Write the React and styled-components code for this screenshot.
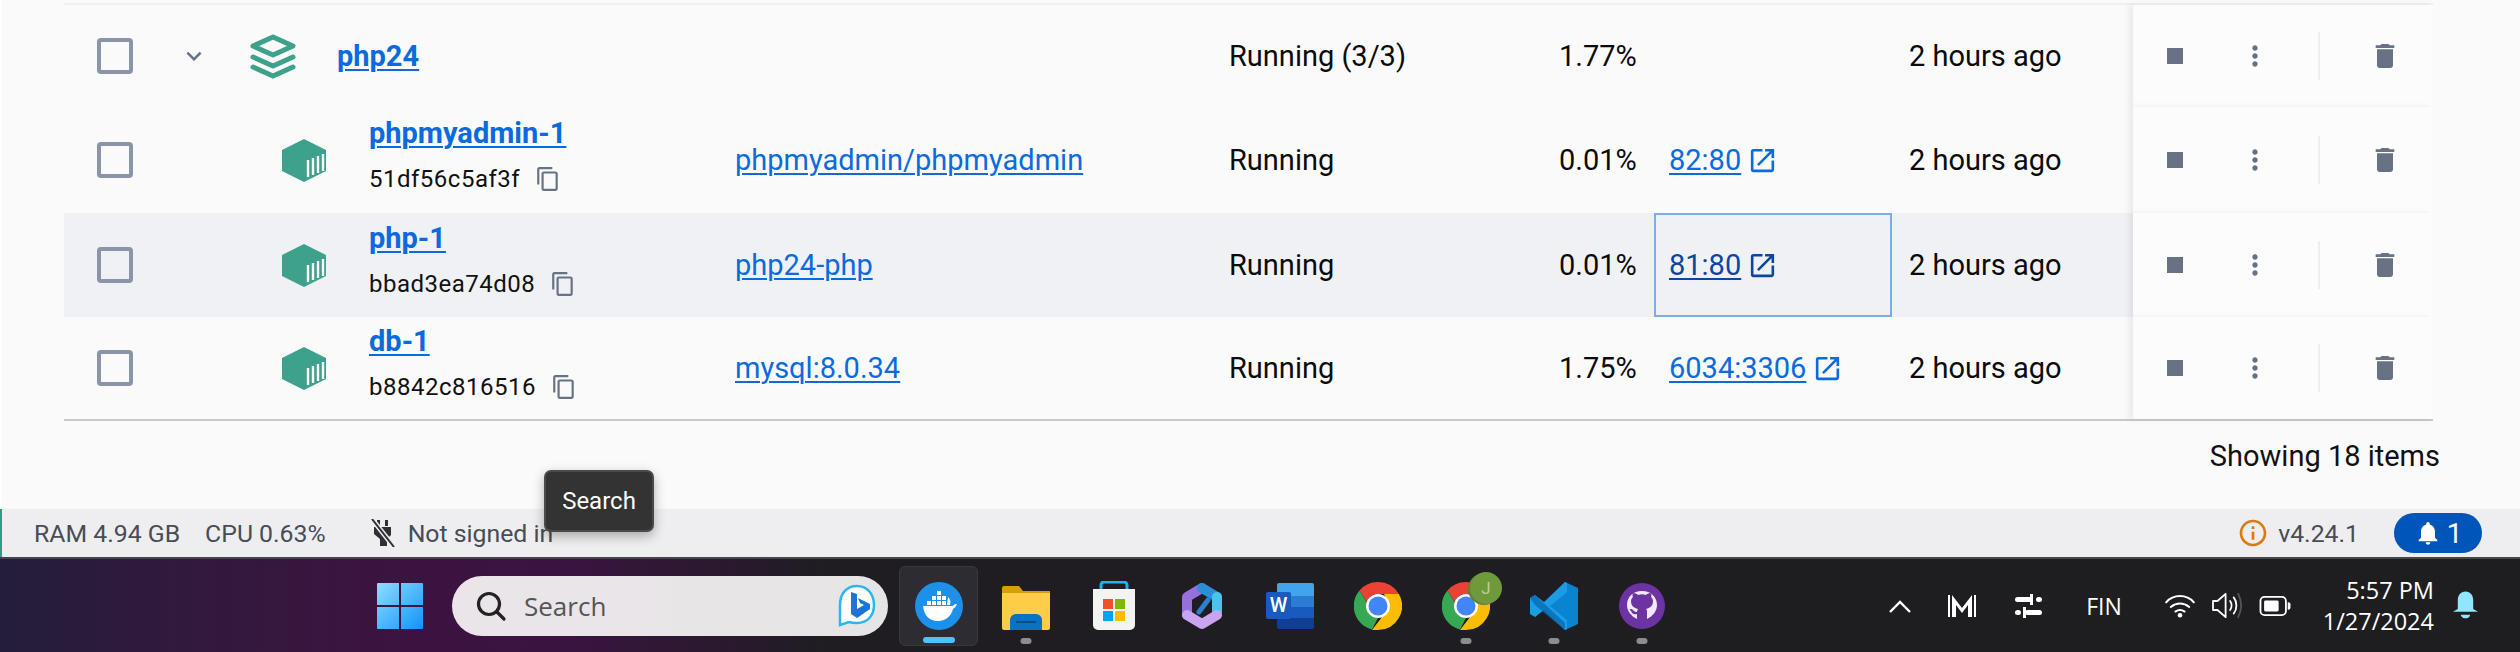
import React from "react";
import styled, { createGlobalStyle } from "styled-components";
import {
  MdContentCopy,
  MdDelete,
  MdExpandMore,
  MdInfoOutline,
  MdMoreVert,
  MdNotifications,
  MdOpenInNew,
  MdStop,
} from "react-icons/md";

const GlobalStyle = createGlobalStyle`
  html, body { margin: 0; padding: 0; background: #fafafa; }
  body { font-family: Roboto, "Liberation Sans", sans-serif; overflow: hidden; }
  * { box-sizing: border-box; }
`;

const Page = styled.div`
  width: 2520px;
  height: 652px;
  display: flex;
  flex-direction: column;
  position: relative;
  overflow: hidden;
`;

const Content = styled.main`
  flex: 1;
  padding: 0 87px 0 64px;
  background: #fafafa;
  border-left: 2px solid #fff;
`;

const gridCols = "671px 494px 330px 95px 238px 241px 300px";

const TopStrip = styled.div`
  height: 5px;
  margin-left: -2px;
  border-bottom: 2px solid #f0f0f1;
`;

const Row = styled.div`
  height: ${(p) => p.$h}px;
  margin-left: -2px;
  display: grid;
  grid-template-columns: ${gridCols};
  align-items: center;
  background: ${(p) => (p.$hover ? "#f0f1f4" : "#fafafa")};
  font-size: 29px;
  color: #0b0b0c;
`;

const NameCell = styled.div`
  display: flex;
  align-items: center;
  padding-left: 33px;
  height: 100%;
`;

const Checkbox = styled.span`
  width: 36px;
  height: 36px;
  border: 4px solid #8b94a8;
  border-radius: 4px;
  flex: none;
`;

const Chevron = styled.span`
  display: flex;
  margin-left: 42px;
  width: 38px;
  justify-content: center;
  color: #677285;
  font-size: 30px;
`;

const KindIcon = styled.svg`
  flex: none;
  width: 48px;
  height: 48px;
  margin-left: ${(p) => p.$ml}px;
`;

const NameStack = styled.div`
  margin-left: ${(p) => p.$ml}px;
  margin-bottom: ${(p) => (p.$single ? 0 : 10)}px;
  display: flex;
  flex-direction: column;
  gap: 14px;
`;

const NameLink = styled.a`
  color: #0b6bdc;
  font-size: 29px;
  font-weight: 700;
  line-height: 34px;
  text-decoration: underline;
  text-underline-offset: 3px;
  text-decoration-thickness: 2px;
`;

const IdRow = styled.div`
  display: flex;
  align-items: center;
  gap: 15px;
  font-size: 24px;
  line-height: 30px;
  letter-spacing: 0.5px;
  color: #111;
`;

const CopyIcon = styled(MdContentCopy)`
  color: #677285;
  font-size: 26px;
`;

const TextLink = styled.a`
  color: ${(p) => (p.$dark ? "#0c479f" : "#0b6bdc")};
  text-decoration: underline;
  text-underline-offset: 3px;
  text-decoration-thickness: 2px;
`;

const PortCell = styled.div`
  height: 100%;
  display: flex;
  align-items: center;
  gap: 6px;
  padding-left: 13px;
  font-size: 31px;
  color: ${(p) => (p.$dark ? "#0c479f" : "#0b6bdc")};
  border: ${(p) => (p.$focus ? "2px solid #7aaee8" : "2px solid transparent")};

  ${TextLink} {
    font-size: 29px;
  }
`;

const TimeCell = styled.div`
  padding-left: 17px;
`;

const ActionCell = styled.div`
  height: 100%;
  background: #fcfcfc;
  box-shadow: -4px 0 6px rgba(0, 0, 0, 0.07);
  display: grid;
  grid-template-columns: 84px 76px 52px 80px;
  align-items: center;
  justify-items: center;
  color: #677285;
  font-size: 32px;
`;

const ActionDivider = styled.span`
  width: 2px;
  height: 48px;
  background: #eeeeef;
`;

const Footer = styled.div`
  margin-left: -2px;
  padding: 18px 0 0;
  border-top: 2px solid #c4c8d1;
  display: flex;
  justify-content: flex-end;
  font-size: 29px;
  color: #111;
`;

const FooterText = styled.span`
  margin-right: -7px;
`;

const StatusBar = styled.footer`
  height: 48px;
  flex: none;
  display: flex;
  align-items: center;
  padding: 0 38px 0 32px;
  background: #eeeef0;
  border-left: 2px solid #2f9c88;
  font-size: 24.8px;
  color: #474c55;
`;

const StatText = styled.span`
  margin-right: ${(p) => p.$mr}px;
`;

const PlugSvg = styled.svg`
  margin-right: 12px;
  flex: none;
`;

const VersionInfo = styled.span`
  margin-left: auto;
  display: flex;
  align-items: center;
  gap: 9px;
`;

const InfoIcon = styled(MdInfoOutline)`
  color: #dd7a0c;
  font-size: 32px;
`;

const NotifyPill = styled.span`
  margin-left: 35px;
  width: 88px;
  height: 40px;
  border-radius: 20px;
  background: #0055bb;
  color: #fff;
  display: flex;
  align-items: center;
  justify-content: center;
  gap: 5px;
  font-size: 28px;
`;

const Tooltip = styled.div`
  position: absolute;
  left: 544px;
  top: 470px;
  width: 110px;
  height: 62px;
  border-radius: 7px;
  border: 2px solid #4a4a4a;
  background: #333;
  color: #fff;
  font-size: 24px;
  display: flex;
  align-items: center;
  justify-content: center;
  box-shadow: 0 4px 12px rgba(0, 0, 0, 0.3);
`;

const Taskbar = styled.div`
  height: 95px;
  flex: none;
  display: flex;
  align-items: center;
  border-top: 2px solid #46464a;
  padding-left: 377px;
  background: linear-gradient(90deg, #241d3b 0, #33193c 200px, #3c1340 420px, #3a1440 560px, #1f1d22 830px, #1e1e20 100%);
  color: #fff;
  position: relative;
`;

const SearchBox = styled.div`
  margin-left: 29px;
  width: 436px;
  height: 60px;
  border-radius: 30px;
  background: linear-gradient(90deg, #ebe5e9, #e6e5e6);
  display: flex;
  align-items: center;
  padding: 0 11px 0 23px;
  color: #555;
  font-family: "Open Sans", Roboto, sans-serif;
  font-size: 26px;
  gap: 17px;
  & > svg:last-child { margin-left: auto; }
`;

const AppList = styled.div`
  margin-left: 11px;
  display: flex;
  align-items: center;
`;

const AppSlot = styled.div`
  width: ${(p) => (p.$active ? 79 : 88)}px;
  margin-right: ${(p) => (p.$active ? 4 : 0)}px;
  height: 80px;
  display: flex;
  align-items: center;
  justify-content: center;
  position: relative;
  border-radius: 6px;
  background: ${(p) => (p.$active ? "#2e2c33" : "transparent")};
  border: ${(p) => (p.$active ? "1px solid #3a383f" : "none")};
`;

const AppDot = styled.span`
  position: absolute;
  bottom: 2px;
  left: 50%;
  transform: translateX(-50%);
  height: 6px;
  width: ${(p) => (p.$active ? 32 : 11)}px;
  border-radius: 3px;
  background: ${(p) => (p.$active ? "#4cc2ff" : "#8d8d8f")};
`;

const Tray = styled.div`
  position: absolute;
  right: 35px;
  top: 0;
  bottom: 0;
  display: flex;
  align-items: center;
`;

const TrayItem = styled.span`
  width: 40px;
  margin-left: ${(p) => p.$ml}px;
  display: flex;
  justify-content: center;
  font-family: "Open Sans", Roboto, sans-serif;
  font-size: 23px;
`;

const Clock = styled.div`
  width: 139px;
  text-align: right;
  font-family: "Open Sans", Roboto, sans-serif;
  font-size: 23.5px;
  line-height: 31px;
`;

const WinLogo = () => (
  <svg width="46" height="46" viewBox="0 0 46 46">
    <defs>
      <linearGradient id="w1" x1="0" y1="0" x2="1" y2="1">
        <stop offset="0" stopColor="#8fdcff" />
        <stop offset="1" stopColor="#0f94fb" />
      </linearGradient>
    </defs>
    <path d="M1 0h21v22H0V1a1 1 0 0 1 1-1zM24 0h21a1 1 0 0 1 1 1v21H24zM0 24h22v22H1a1 1 0 0 1-1-1zM24 24h22v21a1 1 0 0 1-1 1H24z" fill="url(#w1)" />
  </svg>
);

const StackIcon = () => (
  <KindIcon $ml={36} viewBox="0 0 48 48" fill="none" stroke="#3da18c" strokeWidth="5" strokeLinecap="round" strokeLinejoin="round">
    <path d="M24 5 44 14 24 23 4 14z" />
    <path d="M4 25 24 34 44 25" />
    <path d="M4 35 24 44 44 35" />
  </KindIcon>
);

const ContainerIcon = () => (
  <KindIcon $ml={147} viewBox="0 0 48 48">
    <path d="M24 3 46 14v21L24 46 2 35V14z" fill="#3da18c" strokeLinejoin="round" />
    <path d="M28 41V24M33 39V22M38 37V20M43 35V18" stroke="#fff" strokeWidth="2.4" />
  </KindIcon>
);

const PlugIcon = () => (
  <PlugSvg width="26" height="28" viewBox="0 0 26 28" fill="#2e3036">
    <path d="M7 1h3v6H7zM15 1h3v6h-3zM4 8h17v8l-4 4v7h-7v-7l-6-5z" />
    <path d="M2 0 24 28" stroke="#eeeef0" strokeWidth="5" />
    <path d="M2 0 24 28" stroke="#2e3036" strokeWidth="2" />
  </PlugSvg>
);

const SearchIcon = () => (
  <svg width="32" height="32" viewBox="0 0 32 32" fill="none" stroke="#222" strokeWidth="3.2" strokeLinecap="round">
    <circle cx="14" cy="14" r="10.5" />
    <path d="M22 22l7 7" />
  </svg>
);

const BingIcon = () => (
  <svg width="40" height="44" viewBox="0 0 40 44" fill="none">
    <path d="M20 2C9 2 3 10 3 21v20l9-3c3 1 5 1 8 1 11 0 17-8 17-18S31 2 20 2z" stroke="#2cb6f0" strokeWidth="2.5" fill="#fff" />
    <path d="M14 8l6 2v15l7-4-4-2-2-5 12 6v5L20 34l-6-4z" fill="#1c73d8" />
  </svg>
);

const DockerIcon = () => (
  <svg width="48" height="48" viewBox="0 0 48 48">
    <circle cx="24" cy="24" r="24" fill="#1d91ea" />
    <path d="M8 24h29c1 0 2-2 5-2-1 2-2 4-4 5-2 8-8 12-15 12-9 0-14-6-15-15z" fill="#fff" />
    <path d="M12 19h4v4h-4zM17 19h4v4h-4zM22 19h4v4h-4zM27 19h4v4h-4zM17 14h4v4h-4zM22 14h4v4h-4zM27 14h4v4h-4zM22 9h4v4h-4z" fill="#fff" />
    <path d="M33 15c2 2 3 4 2 8h-3z" fill="#fff" />
  </svg>
);

const FolderIcon = () => (
  <svg width="48" height="48" viewBox="0 0 48 48">
    <path d="M0 6a2 2 0 0 1 2-2h15l4 5h27v4H0z" fill="#d99e00" />
    <path d="M0 11h48v35a2 2 0 0 1-2 2H2a2 2 0 0 1-2-2z" fill="#fdcd4a" />
    <path d="M8 48V38a6 6 0 0 1 6-6h20a6 6 0 0 1 6 6v10z" fill="#0a72c2" />
    <path d="M14 40h20" stroke="#054f8d" strokeWidth="2" />
  </svg>
);

const StoreIcon = () => (
  <svg width="46" height="50" viewBox="0 0 46 50">
    <path d="M10 12V4a3 3 0 0 1 3-3h20a3 3 0 0 1 3 3v8" fill="none" stroke="#1eb3ea" strokeWidth="3" />
    <path d="M2 8h42v36a5 5 0 0 1-5 5H7a5 5 0 0 1-5-5z" fill="#f3f3f3" />
    <path d="M12 18h10v10H12z" fill="#f25022" />
    <path d="M24 18h10v10H24z" fill="#7fba00" />
    <path d="M12 30h10v10H12z" fill="#00a4ef" />
    <path d="M24 30h10v10H24z" fill="#ffb900" />
  </svg>
);

const CopilotIcon = () => (
  <svg width="42" height="48" viewBox="0 0 42 48" fill="none" strokeWidth="10" strokeLinejoin="round" strokeLinecap="round">
    <path d="M6 33V15L21 6" stroke="#9770dc" />
    <path d="M21 6 36 15" stroke="#2b8fd6" />
    <path d="M36 15V30" stroke="#48c5e8" />
    <path d="M6 33 21 42 36 33" stroke="#c8a4f1" />
    <path d="M27 18 18 30" stroke="#2f7fd0" strokeWidth="5" />
  </svg>
);

const WordIcon = () => (
  <svg width="48" height="46" viewBox="0 0 48 46">
    <path d="M11 2a2 2 0 0 1 2-2h33a2 2 0 0 1 2 2v11H11z" fill="#41a5ee" />
    <path d="M11 13h37v11H11z" fill="#2b7cd3" />
    <path d="M11 24h37v11H11z" fill="#185abd" />
    <path d="M11 35h37v9a2 2 0 0 1-2 2H13a2 2 0 0 1-2-2z" fill="#103f91" />
    <rect x="0" y="9" width="25" height="27" rx="2" fill="#185abd" />
    <text x="12.5" y="29" textAnchor="middle" fontFamily="Roboto, sans-serif" fontSize="20" fontWeight="500" fill="#fff">W</text>
  </svg>
);

const ChromeIcon = () => (
  <svg width="48" height="48" viewBox="0 0 48 48">
    <path d="M24 0a24 24 0 0 1 20.8 12H24a12 12 0 0 0-11.3 8L5.5 8.5A24 24 0 0 1 24 0z" fill="#ea4335" />
    <path d="M5.5 8.5 16 26a10 10 0 0 0 8 10l-6 11.4A24 24 0 0 1 5.5 8.5z" fill="#34a853" />
    <path d="M44.8 12A24 24 0 0 1 24 48h-6l10-13a10 10 0 0 0 5-15l-3-8z" fill="#fbbc04" />
    <circle cx="24" cy="24" r="12" fill="#fff" />
    <circle cx="24" cy="24" r="9.5" fill="#4285f4" />
  </svg>
);

const ProfileChrome = styled.span`
  position: relative;
  display: flex;
`;

const ProfileBadge = styled.span`
  position: absolute;
  right: -12px;
  top: -10px;
  width: 32px;
  height: 32px;
  border-radius: 50%;
  background: #6e9a3c;
  box-shadow: -2px 1px 0 #5c8433;
  color: #b8cf98;
  font-size: 17px;
  display: flex;
  align-items: center;
  justify-content: center;
`;

const VsCodeIcon = () => (
  <svg width="48" height="48" viewBox="0 0 48 48">
    <path d="M35 0 48 6v36l-13 6L12 26z" fill="#0a84cf" />
    <path d="M35 0 14 20 5 13 0 16v16l5 3 9-7 21 20 2-1V38L20 24 37 10V1z" fill="#1c9ce6" />
    <path d="M0 16l5-3 30 28v7L5 23z" fill="#0b6fb3" opacity="0.85" />
  </svg>
);

const GithubIcon = () => (
  <svg width="46" height="46" viewBox="0 0 46 46">
    <circle cx="23" cy="23" r="23" fill="#6e33a3" />
    <path d="M23 8c-9 0-15 6-15 14 0 6 4 11 10 14v-5c-4 1-5-1-6-3-1-1-2-2 0-2 2 0 3 3 5 3h1c0-2 1-2 1-3-4-1-7-3-7-8 0-2 1-3 2-4-1-1 0-4 0-4s3 0 5 2c3-1 5-1 8 0 2-2 5-2 5-2s1 3 0 4c1 1 2 2 2 4 0 5-3 7-7 8 1 1 1 2 1 3v7c6-3 10-8 10-14C38 14 32 8 23 8z" fill="#f2e9f8" />
  </svg>
);

const TrayChevron = () => (
  <svg width="24" height="14" viewBox="0 0 24 14" fill="none" stroke="#fff" strokeWidth="2.4">
    <path d="M2 13 12 3l10 10" />
  </svg>
);

const MIcon = () => (
  <svg width="28" height="22" viewBox="0 0 28 22" fill="#fff">
    <path d="M0 0h2v22H0zM26 0h2v22h-2zM4 0l10 13L24 0v22h-4V10l-6 8-6-8v12H4z" />
  </svg>
);

const SlidersIcon = () => (
  <svg width="27" height="24" viewBox="0 0 27 24" fill="#fff">
    <rect x="0" y="3" width="17" height="5" rx="2.5" />
    <rect x="15" y="0" width="3" height="11" />
    <rect x="21" y="3" width="6" height="5" rx="2.5" />
    <rect x="10" y="16" width="17" height="5" rx="2.5" />
    <rect x="8" y="13" width="3" height="11" />
    <rect x="0" y="16" width="6" height="5" rx="2.5" />
  </svg>
);

const WifiIcon = () => (
  <svg width="32" height="24" viewBox="0 0 34 26" fill="none" stroke="#fff" strokeWidth="2.2" strokeLinecap="round">
    <path d="M2 9c8-9 22-9 30 0M7 14c6-5 14-5 20 0M12 19c3-2 7-2 10 0" />
    <circle cx="17" cy="23" r="2.5" fill="#fff" stroke="none" />
  </svg>
);

const VolumeIcon = () => (
  <svg width="31" height="27" viewBox="0 0 34 30" fill="none" stroke="#fff" strokeWidth="2">
    <path d="M2 10h5l9-8v26l-9-8H2z" strokeLinejoin="round" />
    <path d="M21 10c2 3 2 7 0 10M25 6c4 5 4 13 0 18" strokeLinecap="round" />
    <path d="M30 2c4 8 4 18 0 26" stroke="#555" strokeLinecap="round" />
  </svg>
);

const BatteryIcon = () => (
  <svg width="32" height="20" viewBox="0 0 34 22">
    <rect x="1" y="1" width="28" height="20" rx="4.5" fill="none" stroke="#fff" strokeWidth="2" />
    <rect x="5" y="5" width="16" height="12" rx="1.5" fill="#fff" />
    <path d="M31 7h1a2 2 0 0 1 2 2v4a2 2 0 0 1-2 2h-1z" fill="#fff" />
  </svg>
);

const TrayBell = () => (
  <svg width="27" height="30" viewBox="0 0 28 30" fill="#8fe6ff">
    <path d="M14 0c5 0 8 4 8 9v9l5 3H1l5-3V9c0-5 3-9 8-9z" />
    <path d="M9 24h10c-1 5-9 5-10 0z" />
  </svg>
);

const containers = [
  { name: "phpmyadmin-1", id: "51df56c5af3f", image: "phpmyadmin/phpmyadmin", cpu: "0.01%", port: "82:80", h: 106 },
  { name: "php-1", id: "bbad3ea74d08", image: "php24-php", cpu: "0.01%", port: "81:80", h: 104, hover: true },
  { name: "db-1", id: "b8842c816516", image: "mysql:8.0.34", cpu: "1.75%", port: "6034:3306", h: 102 },
];

const apps = [
  { key: "docker", Icon: DockerIcon, active: true },
  { key: "folder", Icon: FolderIcon, dot: true },
  { key: "store", Icon: StoreIcon },
  { key: "copilot", Icon: CopilotIcon },
  { key: "word", Icon: WordIcon },
  { key: "chrome", Icon: ChromeIcon },
  {
    key: "chrome2",
    dot: true,
    Icon: () => (
      <ProfileChrome>
        <ChromeIcon />
        <ProfileBadge>J</ProfileBadge>
      </ProfileChrome>
    ),
  },
  { key: "vscode", Icon: VsCodeIcon, dot: true },
  { key: "github", Icon: GithubIcon, dot: true },
];

function Actions() {
  return (
    <ActionCell>
      <MdStop />
      <MdMoreVert />
      <ActionDivider />
      <MdDelete />
    </ActionCell>
  );
}

function ContainerRow({ item }) {
  return (
    <Row $h={item.h} $hover={item.hover}>
      <NameCell>
        <Checkbox />
        <ContainerIcon />
        <NameStack $ml={41}>
          <NameLink>{item.name}</NameLink>
          <IdRow>
            {item.id}
            <CopyIcon />
          </IdRow>
        </NameStack>
      </NameCell>
      <div>
        <TextLink>{item.image}</TextLink>
      </div>
      <div>Running</div>
      <div>{item.cpu}</div>
      <PortCell $focus={item.hover} $dark={item.hover}>
        <TextLink $dark={item.hover}>{item.port}</TextLink>
        <MdOpenInNew />
      </PortCell>
      <TimeCell>2 hours ago</TimeCell>
      <Actions />
    </Row>
  );
}

export default function App() {
  return (
    <Page>
      <GlobalStyle />
      <Content>
        <TopStrip />
        <Row $h={102}>
          <NameCell>
            <Checkbox />
            <Chevron>
              <MdExpandMore />
            </Chevron>
            <StackIcon />
            <NameStack $ml={40} $single>
              <NameLink>php24</NameLink>
            </NameStack>
          </NameCell>
          <div />
          <div>Running (3/3)</div>
          <div>1.77%</div>
          <div />
          <TimeCell>2 hours ago</TimeCell>
          <Actions />
        </Row>
        {containers.map((c) => (
          <ContainerRow key={c.name} item={c} />
        ))}
        <Footer>
          <FooterText>Showing 18 items</FooterText>
        </Footer>
      </Content>
      <StatusBar>
        <StatText $mr={25}>RAM 4.94 GB</StatText>
        <StatText $mr={44}>CPU 0.63%</StatText>
        <PlugIcon />
        <span>Not signed in</span>
        <VersionInfo>
          <InfoIcon />
          v4.24.1
        </VersionInfo>
        <NotifyPill>
          <MdNotifications />1
        </NotifyPill>
      </StatusBar>
      <Tooltip>Search</Tooltip>
      <Taskbar>
        <WinLogo />
        <SearchBox>
          <SearchIcon />
          Search
          <BingIcon />
        </SearchBox>
        <AppList>
          {apps.map(({ key, Icon, active, dot }) => (
            <AppSlot key={key} $active={active}>
              <Icon />
              {(active || dot) && <AppDot $active={active} />}
            </AppSlot>
          ))}
        </AppList>
        <Tray>
          <TrayItem $ml={0}><TrayChevron /></TrayItem>
          <TrayItem $ml={22}><MIcon /></TrayItem>
          <TrayItem $ml={26}><SlidersIcon /></TrayItem>
          <TrayItem $ml={36}>FIN</TrayItem>
          <TrayItem $ml={36}><WifiIcon /></TrayItem>
          <TrayItem $ml={6}><VolumeIcon /></TrayItem>
          <TrayItem $ml={9}><BatteryIcon /></TrayItem>
          <Clock>
            5:57 PM
            <br />
            1/27/2024
          </Clock>
          <TrayItem $ml={11}><TrayBell /></TrayItem>
        </Tray>
      </Taskbar>
    </Page>
  );
}
